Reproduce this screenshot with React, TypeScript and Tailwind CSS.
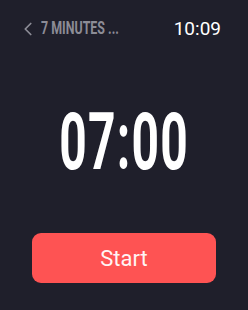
import { ChevronLeft } from "lucide-react";

export default function App() {
  return (
    <div className="flex h-[310px] w-[248px] flex-col bg-[#1f1f2b] font-['Roboto',sans-serif]">
      {/* status row */}
      <div className="flex h-[58px] items-center justify-between pl-[17px] pr-[27px] pb-[1px]">
        <div className="flex items-center text-[#8c8c96]">
          <ChevronLeft size={22} strokeWidth={1.9} />
          <span className="ml-[2px] inline-block origin-left scale-x-73 scale-y-105 whitespace-nowrap text-[17px] font-bold leading-none">
            7 MINUTES ...
          </span>
        </div>
        <span className="text-[19px] leading-none text-white">10:09</span>
      </div>

      {/* timer */}
      <div className="flex h-[175px] items-start justify-center pt-[44px]">
        <span className="inline-block scale-x-[0.6] text-[80px] font-bold leading-none tracking-[2px] text-white">
          07:00
        </span>
      </div>

      <div className="px-[32px]">
        <button
          type="button"
          className="flex h-[50px] w-full items-center justify-center rounded-[9px] bg-[#fe5353] text-[22px] text-[#fff4f4]"
        >
          Start
        </button>
      </div>
    </div>
  );
}
